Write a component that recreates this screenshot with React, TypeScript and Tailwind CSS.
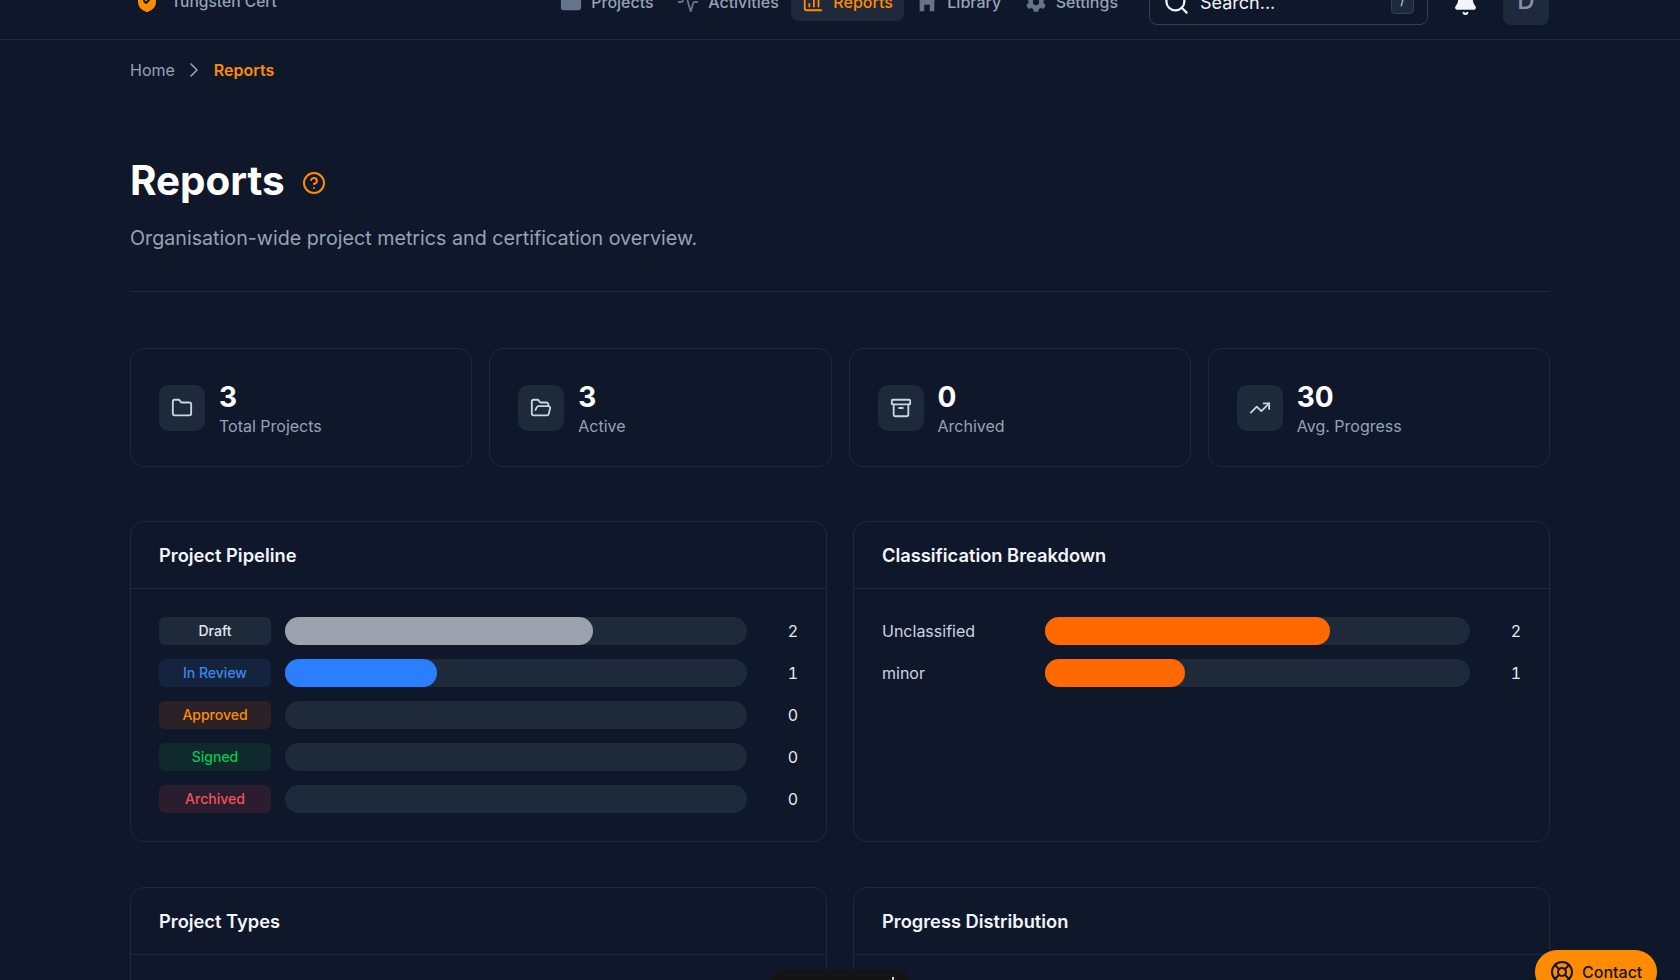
import { Archive, ChartColumn, ChevronRight, CircleHelp, Folder, FolderOpen, LifeBuoy, Search, TrendingUp, Activity, Bell } from "lucide-react";
import { FaGear } from "react-icons/fa6";

function LibraryIcon({ size, className }: { size?: number; fill?: string; className?: string }) {
  return (
    <svg width={size} height={size} viewBox="0 0 24 24" fill="currentColor" className={className}>
      <path d="M3 0h18v10h-1v12h-5v-7H9v7H4V10H3z" />
    </svg>
  );
}

function GearIcon({ className }: { size?: number; fill?: string; className?: string }) {
  return (
    <span className="mx-[1px]">
      <FaGear size={20} className={className} />
    </span>
  );
}

const navItems = [
  { label: "Projects", icon: Folder, fill: true },
  { label: "Activities", icon: Activity },
  { label: "Reports", icon: ChartColumn, active: true },
  { label: "Library", icon: LibraryIcon, fill: true },
  { label: "Settings", icon: GearIcon, fill: true },
];

const stats = [
  { value: "3", label: "Total Projects", icon: Folder },
  { value: "3", label: "Active", icon: FolderOpen },
  { value: "0", label: "Archived", icon: Archive },
  { value: "30", label: "Avg. Progress", icon: TrendingUp },
];

const pipeline = [
  { label: "Draft", count: 2, pct: 66.7, badge: "bg-[#1e2a3a] text-[#e2e8f0]", bar: "bg-[#9ca3af]" },
  { label: "In Review", count: 1, pct: 33, badge: "bg-[#14243f] text-[#3b8ae6]", bar: "bg-[#2b7fff]" },
  { label: "Approved", count: 0, pct: 0, badge: "bg-[#2a2226] text-[#ff8c00]", bar: "bg-[#ff8c00]" },
  { label: "Signed", count: 0, pct: 0, badge: "bg-[#10292d] text-[#00c950]", bar: "bg-[#00c950]" },
  { label: "Archived", count: 0, pct: 0, badge: "bg-[#2a1d2e] text-[#f0525c]", bar: "bg-[#f0525c]" },
];

const classes = [
  { label: "Unclassified", count: 2, pct: 67 },
  { label: "minor", count: 1, pct: 33 },
];

function Panel({ title, children }: { title: string; children?: React.ReactNode }) {
  return (
    <div className="rounded-[14px] border border-[#1e2a3a] bg-[#0f172a]">
      <div className="flex h-[67px] items-center border-b border-[#1e2a3a] px-7 pt-[1px]">
        <h2 className="text-[18.3px] font-semibold text-[#f1f5f9]">{title}</h2>
      </div>
      {children}
    </div>
  );
}

export default function App() {
  return (
    <div className="relative h-[980px] overflow-hidden bg-[#0f172a] font-['Inter',sans-serif]">
      <div className="mt-[-24px]">
        <header className="flex h-[64px] items-center justify-between border-b border-[#1e293b] pb-[13px] pl-[130px] pr-[131px]">
          <div className="flex items-center gap-3 pl-[5px]">
            <svg width="24" height="24" viewBox="0 0 24 24" fill="#ff8c00" stroke="#ff8c00" strokeWidth="2" strokeLinecap="round" strokeLinejoin="round">
              <path d="M20 13c0 5-3.5 7.5-7.66 8.95a1 1 0 0 1-.67-.01C7.5 20.5 4 18 4 13V6a1 1 0 0 1 1-1c2 0 4.5-1.2 6.24-2.72a1.17 1.17 0 0 1 1.52 0C14.51 3.81 17 5 19 5a1 1 0 0 1 1 1z" />
              <path d="m9 12 2 2 4-4" stroke="#0f172a" fill="none" />
            </svg>
            <span className="pt-[2px] text-[15.6px] font-medium text-[#94a3b8]">Tungsten Cert</span>
          </div>
          <div className="flex items-center">
            <nav className="mr-[20px] flex items-center gap-[1.5px]">
              {navItems.map((n) => (
                <div
                  key={n.label}
                  className={
                    n.active
                      ? "flex h-[40px] items-center gap-[9px] rounded-lg bg-[#1e293b] px-[11px] pt-[2px] text-[16px] font-medium text-[#ff8c00]"
                      : "flex h-[40px] items-center gap-[9px] rounded-lg px-[11px] pt-[2px] text-[16px] font-medium text-[#94a3b8]"
                  }
                >
                  <n.icon size={22} fill={n.fill ? "#64748b" : "none"} className={n.active ? "text-[#ff8c00]" : "text-[#64748b]"} />
                  {n.label}
                </div>
              ))}
            </nav>
            <div className="flex h-[48px] w-[279px] items-center gap-[10px] rounded-lg border border-[#334155] pl-[13px] pr-[13px]">
              <Search size={27} className="mt-[3px] text-[#f1f5f9]" />
              <span className="flex-1 pt-[2px] text-[18px] text-[#f1f5f9]">Search...</span>
              <span className="flex h-[26px] w-[23px] items-center justify-center rounded border border-[#334155] bg-[#1e293b] text-[13px] text-[#cbd5e1]">/</span>
            </div>
            <Bell size={25} fill="#f1f5f9" className="ml-[25px] mt-[5px] text-[#f1f5f9]" />
            <div className="ml-[25px] flex h-[48px] w-[46px] items-center justify-center rounded-lg bg-[#1e293b] text-[24px] font-medium text-[#8494ab]">D</div>
          </div>
        </header>

        <main className="px-[130px]">
          <div className="flex items-center gap-[7.5px] pt-[18px] text-[16px]">
            <span className="text-[#94a3b8]">Home</span>
            <ChevronRight size={24} strokeWidth={1.6} className="text-[#94a3b8]" />
            <span className="font-semibold text-[#ff8c00]">Reports</span>
          </div>

          <div className="mt-[75px] flex items-center gap-[17px]">
            <h1 className="text-[40.4px] font-bold leading-[48px] text-white">Reports</h1>
            <CircleHelp size={24} className="mt-[4px] text-[#ff8c00]" />
          </div>
          <p className="mt-[19px] text-[19.7px] leading-[28px] text-[#94a3b8]">Organisation-wide project metrics and certification overview.</p>
          <div className="mt-[39px] border-t border-[#1e293b]" />

          <div className="mt-[56px] grid grid-cols-4 gap-[17px]">
            {stats.map((s) => (
              <div key={s.label} className="flex h-[119px] items-center gap-[14px] rounded-[14px] border border-[#1e2a3a] px-7">
                <div className="flex h-[46px] w-[46px] items-center justify-center rounded-[10px] bg-[#1e2a3a]">
                  <s.icon size={22} className="text-[#cbd5e1]" />
                </div>
                <div>
                  <div className="pt-[1px] text-[28px] font-bold leading-[36px] text-white">{s.value}</div>
                  <div className="text-[16px] leading-[23px] text-[#94a3b8]">{s.label}</div>
                </div>
              </div>
            ))}
          </div>

          <div className="mt-[54px] grid grid-cols-2 gap-[26px]">
            <Panel title="Project Pipeline">
              <div className="flex flex-col gap-[14px] px-7 pb-7 pt-7">
                {pipeline.map((p) => (
                  <div key={p.label} className="flex items-center gap-[14px]">
                    <span className={"flex h-[28px] w-[112px] items-center justify-center rounded-md pb-[2px] text-[14px] font-medium " + p.badge}>{p.label}</span>
                    <div className="h-[28px] flex-1 rounded-full bg-[#1e2a3a]">
                      <div className={"h-full rounded-full " + p.bar} style={{ width: p.pct + "%" }} />
                    </div>
                    <span className="w-[37px] text-right text-[16px] tabular-nums text-[#e2e8f0]">{p.count}</span>
                  </div>
                ))}
              </div>
            </Panel>
            <Panel title="Classification Breakdown">
              <div className="flex flex-col gap-[14px] px-7 pb-7 pt-7">
                {classes.map((c) => (
                  <div key={c.label} className="flex h-[28px] items-center gap-[14px]">
                    <span className="w-[149px] text-[16px] text-[#cbd5e1]">{c.label}</span>
                    <div className="h-[28px] flex-1 rounded-full bg-[#1e2a3a]">
                      <div className="h-full rounded-full bg-[#ff6900]" style={{ width: c.pct + "%" }} />
                    </div>
                    <span className="w-[37px] text-right text-[16px] tabular-nums text-[#e2e8f0]">{c.count}</span>
                  </div>
                ))}
              </div>
            </Panel>
          </div>

          <div className="mt-[45px] grid grid-cols-2 gap-[26px]">
            <Panel title="Project Types">
              <div className="h-[200px]" />
            </Panel>
            <Panel title="Progress Distribution">
              <div className="h-[200px]" />
            </Panel>
          </div>
        </main>
      </div>

      <div className="absolute left-[767px] top-[969px] h-[40px] w-[145px] rounded-t-[20px] bg-[#141414]">
        <div className="ml-[125px] mt-[8px] h-[3px] w-[2px] bg-[#d4d4d4]" />
      </div>
      <button className="absolute left-[1535px] top-[950px] flex h-[44px] w-[122px] items-center gap-2 rounded-[24px] bg-[#ff8c00] pl-[15px] text-[16px] font-medium text-[#0f172a]">
        <LifeBuoy size={24} />
        Contact
      </button>
    </div>
  );
}
